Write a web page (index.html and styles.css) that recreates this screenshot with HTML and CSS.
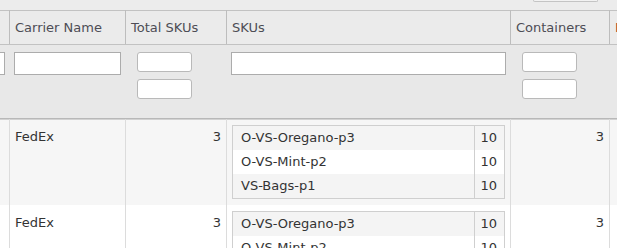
FILE: index.html
```html
<!DOCTYPE html>
<html lang="en">
<head>
    <meta charset="UTF-8">
    <title>Shipments</title>
    <link rel="stylesheet" href="styles.css">
</head>
<body>
    <div class="toolbar">
        <div class="toolbar-btn"></div>
    </div>
    <table class="grid">
        <colgroup>
            <col class="col-select">
            <col class="col-carrier">
            <col class="col-total">
            <col class="col-skus">
            <col class="col-containers">
            <col class="col-errors">
        </colgroup>
        <thead>
            <tr class="head-row">
                <th></th>
                <th>Carrier Name</th>
                <th>Total SKUs</th>
                <th>SKUs</th>
                <th>Containers</th>
                <th class="head-alert">Errors</th>
            </tr>
            <tr class="filter-row">
                <td><input type="text" class="filter-text"></td>
                <td><input type="text" class="filter-text"></td>
                <td>
                    <input type="text" class="filter-range">
                    <input type="text" class="filter-range">
                </td>
                <td><input type="text" class="filter-text"></td>
                <td>
                    <input type="text" class="filter-range">
                    <input type="text" class="filter-range">
                </td>
                <td></td>
            </tr>
        </thead>
        <tbody>
            <tr class="row-alt">
                <td></td>
                <td class="cell-text">FedEx</td>
                <td class="cell-num">3</td>
                <td>
                    <table class="sku-list">
                        <tr><td>O-VS-Oregano-p3</td><td class="sku-qty">10</td></tr>
                        <tr><td>O-VS-Mint-p2</td><td class="sku-qty">10</td></tr>
                        <tr><td>VS-Bags-p1</td><td class="sku-qty">10</td></tr>
                    </table>
                </td>
                <td class="cell-num">3</td>
                <td></td>
            </tr>
            <tr>
                <td></td>
                <td class="cell-text">FedEx</td>
                <td class="cell-num">3</td>
                <td>
                    <table class="sku-list">
                        <tr><td>O-VS-Oregano-p3</td><td class="sku-qty">10</td></tr>
                        <tr><td>O-VS-Mint-p2</td><td class="sku-qty">10</td></tr>
                        <tr><td>VS-Bags-p1</td><td class="sku-qty">10</td></tr>
                    </table>
                </td>
                <td class="cell-num">3</td>
                <td></td>
            </tr>
        </tbody>
    </table>
</body>
</html>
```

FILE: styles.css
```css
body {
    font-family: "DejaVu Sans", Verdana, sans-serif;
    font-size: 13px;
    color: #333;
    background-color: #ffffff;
    margin: 0;
    padding: 0;
    overflow: hidden;
}

.toolbar {
    height: 10px;
    background-color: #ececec;
    display: flex;
    justify-content: flex-end;
}

.toolbar-btn {
    width: 63px;
    height: 1px;
    margin-right: 19px;
    background-color: #f2f2f2;
    border: 1px solid #c4c4c4;
    border-top: none;
    border-radius: 0 0 3px 3px;
}

.grid {
    border-collapse: collapse;
    table-layout: fixed;
    width: 809px;
    margin-left: -100px;
}

.col-select { width: 109px; }
.col-carrier { width: 116px; }
.col-total { width: 101px; }
.col-skus { width: 284px; }
.col-containers { width: 99px; }
.col-errors { width: 100px; }

.head-row th {
    background-color: #ebebeb;
    border-top: 1px solid #c2c2c2;
    border-bottom: 1px solid #c2c2c2;
    border-left: 1px solid #bdbdbd;
    border-right: 1px solid #bdbdbd;
    padding: 9px 5px 8px;
    line-height: 16px;
    font-weight: normal;
    text-align: left;
    color: #4d4d55;
    white-space: nowrap;
    overflow: hidden;
}

.head-row .head-alert {
    color: #a4432c;
}

.filter-row td {
    background-color: #e8e8e8;
    border-bottom: 1px solid #b8b8b8;
    padding: 7px 5px 19px 4px;
    vertical-align: top;
}

.filter-row td:nth-child(3),
.filter-row td:nth-child(5) {
    padding-left: 11px;
}

.filter-text {
    display: block;
    width: 100%;
    height: 23px;
    box-sizing: border-box;
    border: 1px solid #acacac;
    background: #fff;
    margin: 0;
    padding: 0 4px;
}

.filter-range {
    display: block;
    width: 55px;
    height: 20px;
    box-sizing: border-box;
    border: 1px solid #b9b9b9;
    border-radius: 3px;
    background: #fff;
    margin: 0;
    padding: 0 4px;
}

.filter-range + .filter-range {
    margin-top: 7px;
}

tbody td {
    border-left: 1px solid #dcdcdc;
    border-right: 1px solid #dcdcdc;
    padding: 6px 5px;
    vertical-align: top;
}

tbody tr:first-child td {
    box-shadow: inset 0 1px 0 #d2d2d2;
}

.row-alt td {
    background-color: #f6f6f6;
}

.cell-text,
.cell-num {
    line-height: 24px;
}

.cell-num {
    text-align: right;
}

.sku-list {
    width: 100%;
    border-collapse: collapse;
    border: 1px solid #cfcfcf;
    background-color: #fff;
}

.sku-list td {
    border: none;
    box-shadow: none !important;
    padding: 0 8px;
    line-height: 24px;
    background-color: #fff;
}

.sku-list tr:nth-child(odd) td {
    background-color: #f4f4f4;
}

.sku-list .sku-qty {
    width: 17px;
    text-align: right;
    border-left: 1px solid #cfcfcf;
    padding: 0 7px 0 5px;
}
```
